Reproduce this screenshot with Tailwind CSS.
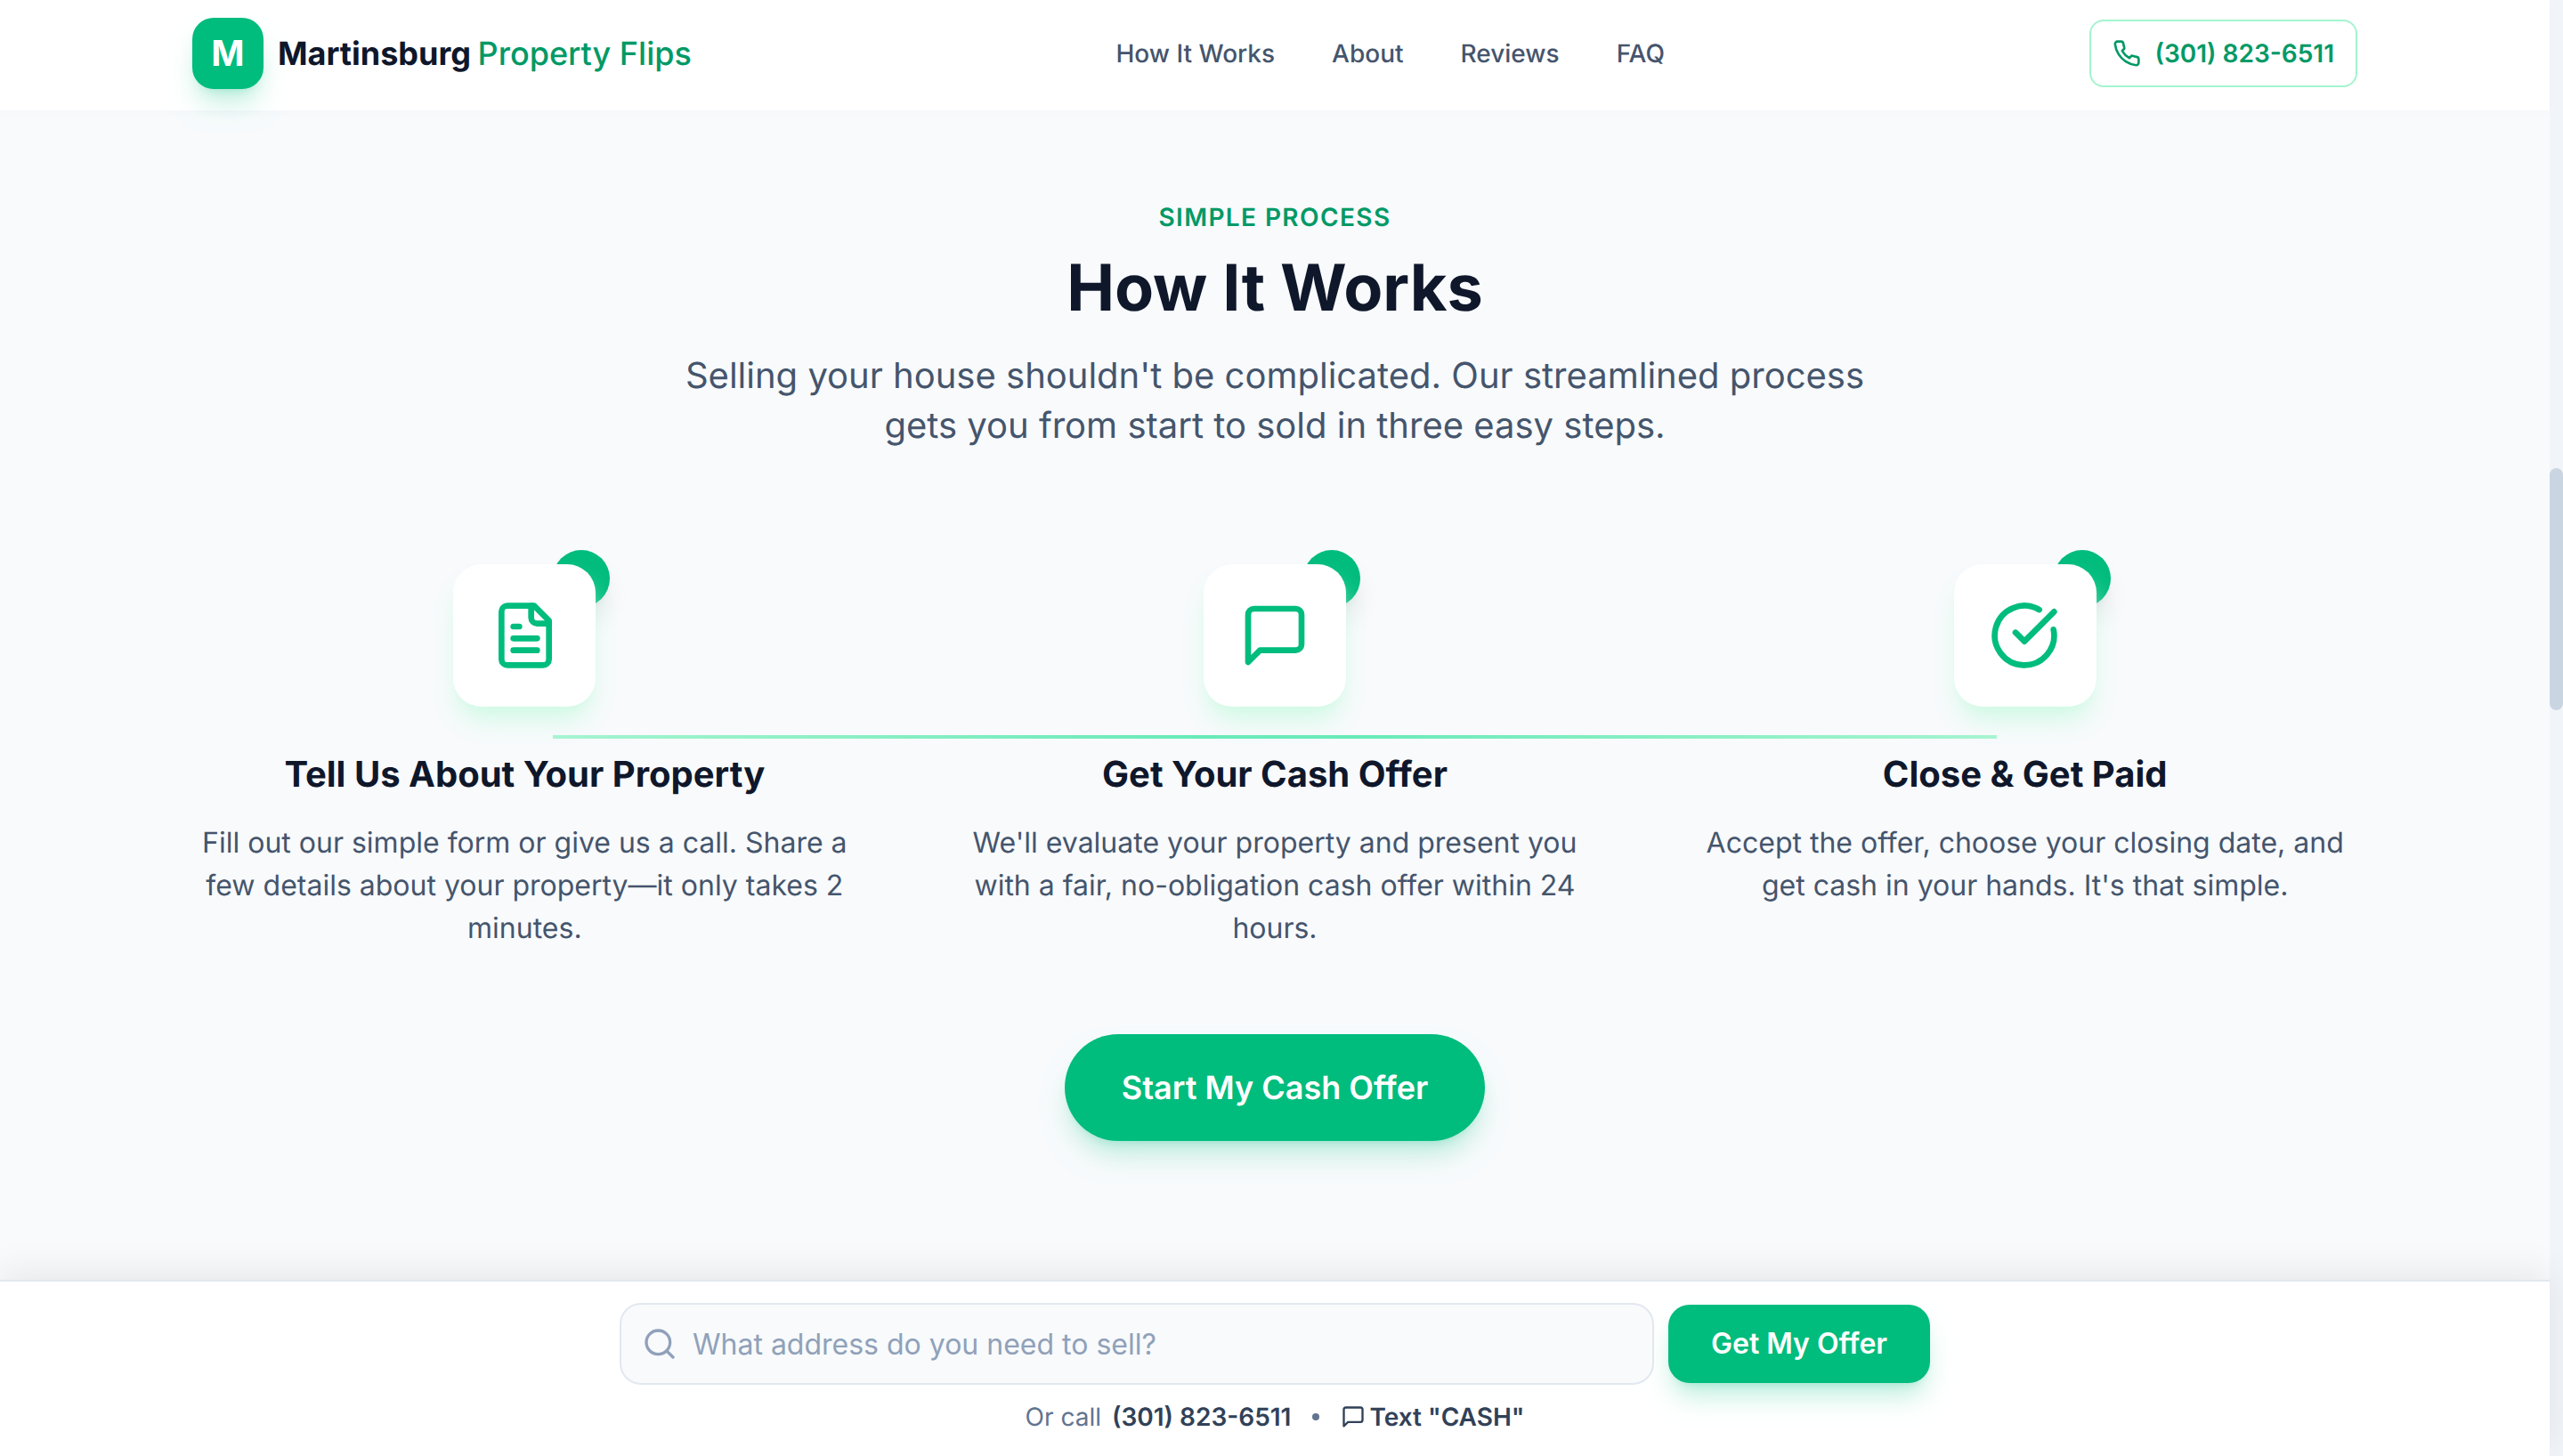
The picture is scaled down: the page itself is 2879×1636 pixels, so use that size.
<!DOCTYPE html>
<html lang="en">
<head>
<meta charset="utf-8">
<title>Martinsburg Property Flips</title>
<script src="https://cdn.jsdelivr.net/npm/@tailwindcss/browser@4"></script>
</head>
<body class="relative flex h-[1636px] w-[2879px] overflow-hidden bg-slate-50 font-[Inter,sans-serif] antialiased [text-rendering:geometricPrecision]">
  <div class="flex h-[818px] w-[1432px] flex-col [zoom:2]">
    <header class="relative z-10 h-[62px] shrink-0 bg-white pb-0.5 shadow-[0_1px_6px_rgba(0,0,0,0.02)]">
      <div class="mx-auto flex h-full max-w-7xl items-center justify-between px-8">
        <a class="flex items-center gap-2">
          <span class="flex h-10 w-10 items-center justify-center rounded-xl bg-emerald-500 text-xl font-bold text-white shadow-lg shadow-emerald-500/25">M</span>
          <span class="text-lg font-bold text-slate-900">Martinsburg<span class="ml-[-1px] font-medium text-emerald-600"> Property Flips</span></span>
        </a>
        <nav class="flex items-center gap-8 text-sm font-medium text-slate-600">
          <a>How It Works</a>
          <a>About</a>
          <a>Reviews</a>
          <a>FAQ</a>
        </nav>
        <a class="flex items-center gap-2 rounded-lg border border-emerald-200 px-3 py-2 text-sm font-semibold text-emerald-600">
          <svg class="h-4 w-4" viewBox="0 0 24 24" fill="none" stroke="currentColor" stroke-width="2" stroke-linecap="round" stroke-linejoin="round"><path d="M22 16.92v3a2 2 0 0 1-2.18 2 19.79 19.79 0 0 1-8.63-3.07 19.5 19.5 0 0 1-6-6 19.79 19.79 0 0 1-3.07-8.67A2 2 0 0 1 4.11 2h3a2 2 0 0 1 2 1.72 12.84 12.84 0 0 0 .7 2.81 2 2 0 0 1-.45 2.11L8.09 9.91a16 16 0 0 0 6 6l1.27-1.27a2 2 0 0 1 2.11-.45 12.84 12.84 0 0 0 2.81.7A2 2 0 0 1 22 16.92z"/></svg>
          (301) 823-6511
        </a>
      </div>
    </header>

    <main class="min-h-0 flex-1 overflow-hidden pt-[50px]">
      <div class="mx-auto max-w-7xl px-8">
        <div class="text-center">
          <p class="mb-2.5 text-sm font-semibold tracking-wider text-emerald-600 uppercase">Simple Process</p>
          <h2 class="mb-[15px] text-4xl font-bold text-slate-900">How It Works</h2>
          <p class="mx-auto mb-16 max-w-2xl text-xl text-slate-600">Selling your house shouldn't be complicated. Our streamlined process gets you from start to sold in three easy steps.</p>
        </div>

        <div class="relative grid grid-cols-3 gap-12 text-center">
          <div class="absolute top-24 right-1/6 left-1/6 h-0.5 bg-linear-to-r from-emerald-200 via-emerald-300 to-emerald-200"></div>

          <div class="relative">
            <div class="relative mx-auto mb-6 h-20 w-20">
              <span class="absolute -top-2 -right-2 h-8 w-8 rounded-full bg-emerald-500 shadow-lg"></span>
              <div class="relative flex h-20 w-20 items-center justify-center rounded-2xl bg-white text-emerald-500 shadow-lg shadow-emerald-100">
                <svg class="h-10 w-10 translate-x-[0.5px]" viewBox="0 0 24 24" fill="none" stroke="currentColor" stroke-width="2" stroke-linecap="round" stroke-linejoin="round"><path d="M15 2H6a2 2 0 0 0-2 2v16a2 2 0 0 0 2 2h12a2 2 0 0 0 2-2V7Z"/><path d="M14 2v4a2 2 0 0 0 2 2h4"/><path d="M10 9H8"/><path d="M16 13H8"/><path d="M16 17H8"/></svg>
              </div>
            </div>
            <h3 class="mb-[12.5px] text-xl font-bold text-slate-900">Tell Us About Your Property</h3>
            <p class="text-slate-600">Fill out our simple form or give us a call. Share a few details about your property—it only takes 2 minutes.</p>
          </div>

          <div class="relative">
            <div class="relative mx-auto mb-6 h-20 w-20">
              <span class="absolute -top-2 -right-2 h-8 w-8 rounded-full bg-emerald-500 shadow-lg"></span>
              <div class="relative flex h-20 w-20 items-center justify-center rounded-2xl bg-white text-emerald-500 shadow-lg shadow-emerald-100">
                <svg class="h-10 w-10" viewBox="0 0 24 24" fill="none" stroke="currentColor" stroke-width="2" stroke-linecap="round" stroke-linejoin="round"><path d="M21 15a2 2 0 0 1-2 2H7l-4 4V5a2 2 0 0 1 2-2h14a2 2 0 0 1 2 2z"/></svg>
              </div>
            </div>
            <h3 class="mb-[12.5px] text-xl font-bold text-slate-900">Get Your Cash Offer</h3>
            <p class="text-slate-600">We'll evaluate your property and present you with a fair, no-obligation cash offer within 24 hours.</p>
          </div>

          <div class="relative">
            <div class="relative mx-auto mb-6 h-20 w-20">
              <span class="absolute -top-2 -right-2 h-8 w-8 rounded-full bg-emerald-500 shadow-lg"></span>
              <div class="relative flex h-20 w-20 items-center justify-center rounded-2xl bg-white text-emerald-500 shadow-lg shadow-emerald-100">
                <svg class="h-10 w-10 -translate-x-[0.5px]" viewBox="0 0 24 24" fill="none" stroke="currentColor" stroke-width="2" stroke-linecap="round" stroke-linejoin="round"><path d="M21.801 10A10 10 0 1 1 17 3.335"/><path d="m9 11 3 3L22 4"/></svg>
              </div>
            </div>
            <h3 class="mb-[12.5px] text-xl font-bold text-slate-900">Close &amp; Get Paid</h3>
            <p class="text-slate-600">Accept the offer, choose your closing date, and get cash in your hands. It's that simple.</p>
          </div>
        </div>

        <div class="mt-[47.5px] text-center">
          <a class="inline-block rounded-full bg-emerald-500 px-8 py-4 text-lg font-semibold text-white shadow-lg shadow-emerald-500/25">Start My Cash Offer</a>
        </div>
      </div>
    </main>

    <div class="relative z-10 h-[99px] shrink-0 border-t border-slate-200 bg-white pt-3 shadow-[0_-4px_20px_rgba(0,0,0,0.08)]">
      <div class="mx-auto max-w-3xl px-4">
        <div class="flex items-center gap-2">
          <div class="relative flex-1">
            <svg class="absolute top-1/2 left-[12.5px] h-5 w-5 -translate-y-1/2 text-slate-400" viewBox="0 0 24 24" fill="none" stroke="currentColor" stroke-width="2" stroke-linecap="round" stroke-linejoin="round"><circle cx="11" cy="11" r="8"/><path d="m21 21-4.3-4.3"/></svg>
            <input type="text" placeholder="What address do you need to sell?" class="block h-[46px] w-full rounded-xl border border-slate-200 bg-slate-50 pr-4 pl-10 text-base text-slate-900 placeholder:text-slate-400">
          </div>
          <button class="rounded-xl bg-emerald-500 px-6 py-2.5 text-base font-semibold text-white shadow-lg shadow-emerald-500/25">Get My Offer</button>
        </div>
        <div class="mt-2 flex items-center justify-center gap-2 text-sm text-slate-500">
          <span class="flex items-center gap-1.5">
            <span>Or call</span>
            <span class="font-semibold text-slate-700">(301) 823-6511</span>
          </span>
          <span class="mx-1 h-1 w-1 rounded-full bg-slate-500"></span>
          <span class="flex items-center gap-[2px] font-semibold text-slate-700">
            <svg class="h-3.5 w-3.5" viewBox="0 0 24 24" fill="none" stroke="currentColor" stroke-width="2" stroke-linecap="round" stroke-linejoin="round"><path d="M21 15a2 2 0 0 1-2 2H7l-4 4V5a2 2 0 0 1 2-2h14a2 2 0 0 1 2 2z"/></svg>
            Text "CASH"
          </span>
        </div>
      </div>
    </div>
  </div>

  <div class="w-[15px] shrink-0 bg-slate-100 pt-[526px]">
    <div class="h-[272px] rounded-full bg-slate-300"></div>
  </div>

  <svg class="absolute top-[1612px] left-[2832px] h-[28px] w-[20px]" viewBox="0 0 20 28"><path d="M2 1v22l6-5 4 9 4-2-4-8h7z" fill="#000" stroke="#fff" stroke-width="1.5"/></svg>
</body>
</html>
